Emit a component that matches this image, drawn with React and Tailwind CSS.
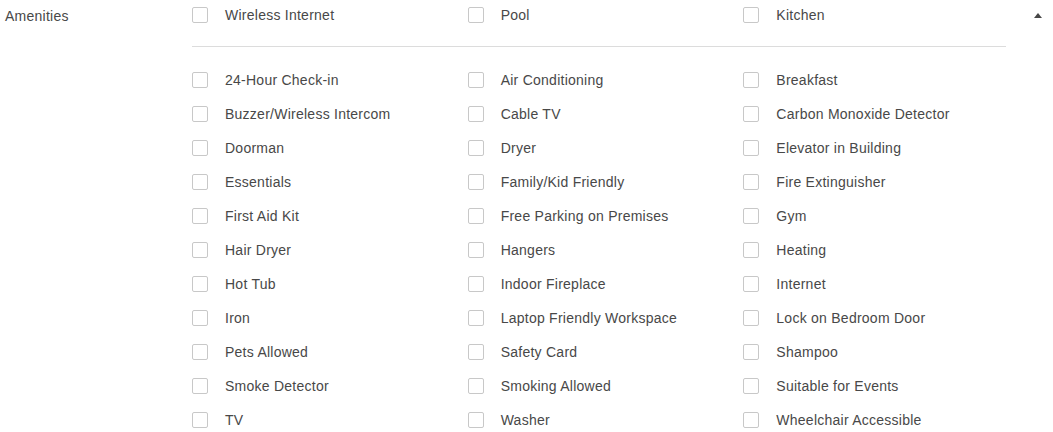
const top = ['Wireless Internet', 'Pool', 'Kitchen'];

const rest = [
  '24-Hour Check-in', 'Air Conditioning', 'Breakfast',
  'Buzzer/Wireless Intercom', 'Cable TV', 'Carbon Monoxide Detector',
  'Doorman', 'Dryer', 'Elevator in Building',
  'Essentials', 'Family/Kid Friendly', 'Fire Extinguisher',
  'First Aid Kit', 'Free Parking on Premises', 'Gym',
  'Hair Dryer', 'Hangers', 'Heating',
  'Hot Tub', 'Indoor Fireplace', 'Internet',
  'Iron', 'Laptop Friendly Workspace', 'Lock on Bedroom Door',
  'Pets Allowed', 'Safety Card', 'Shampoo',
  'Smoke Detector', 'Smoking Allowed', 'Suitable for Events',
  'TV', 'Washer', 'Wheelchair Accessible',
];

function Item({ label }) {
  return (
    <label className="flex h-[34px] items-center">
      <span className="h-4 w-4 shrink-0 rounded-[2px] border border-[#c8c8c8] bg-white" />
      <span className="ml-[17px] text-[14px] tracking-[0.25px] text-[#484848]">{label}</span>
    </label>
  );
}

export default function App() {
  return (
    <div className="flex h-[432px] w-[1053px] overflow-hidden bg-white font-['Liberation_Sans',sans-serif]">
      <div className="w-[192px] shrink-0 pl-[5px] pt-[6px] text-[14px] tracking-[0.25px] text-[#484848]">Amenities</div>
      <div className="w-[827px] shrink-0">
        <div className="grid grid-cols-3 -mt-[2px]">
          {top.map((t) => <Item key={t} label={t} />)}
        </div>
        <div className="mt-[14px] h-px w-[814px] bg-[#dcdcdc]" />
        <div className="mt-[16px] grid grid-cols-3">
          {rest.map((t) => <Item key={t} label={t} />)}
        </div>
      </div>
      <div className="flex flex-1 justify-end pr-[11px] pt-[13px]">
        <svg width="8" height="5" viewBox="0 0 8 5">
          <path d="M0 5 L4 0 L8 5 Z" fill="#484848" />
        </svg>
      </div>
    </div>
  );
}
